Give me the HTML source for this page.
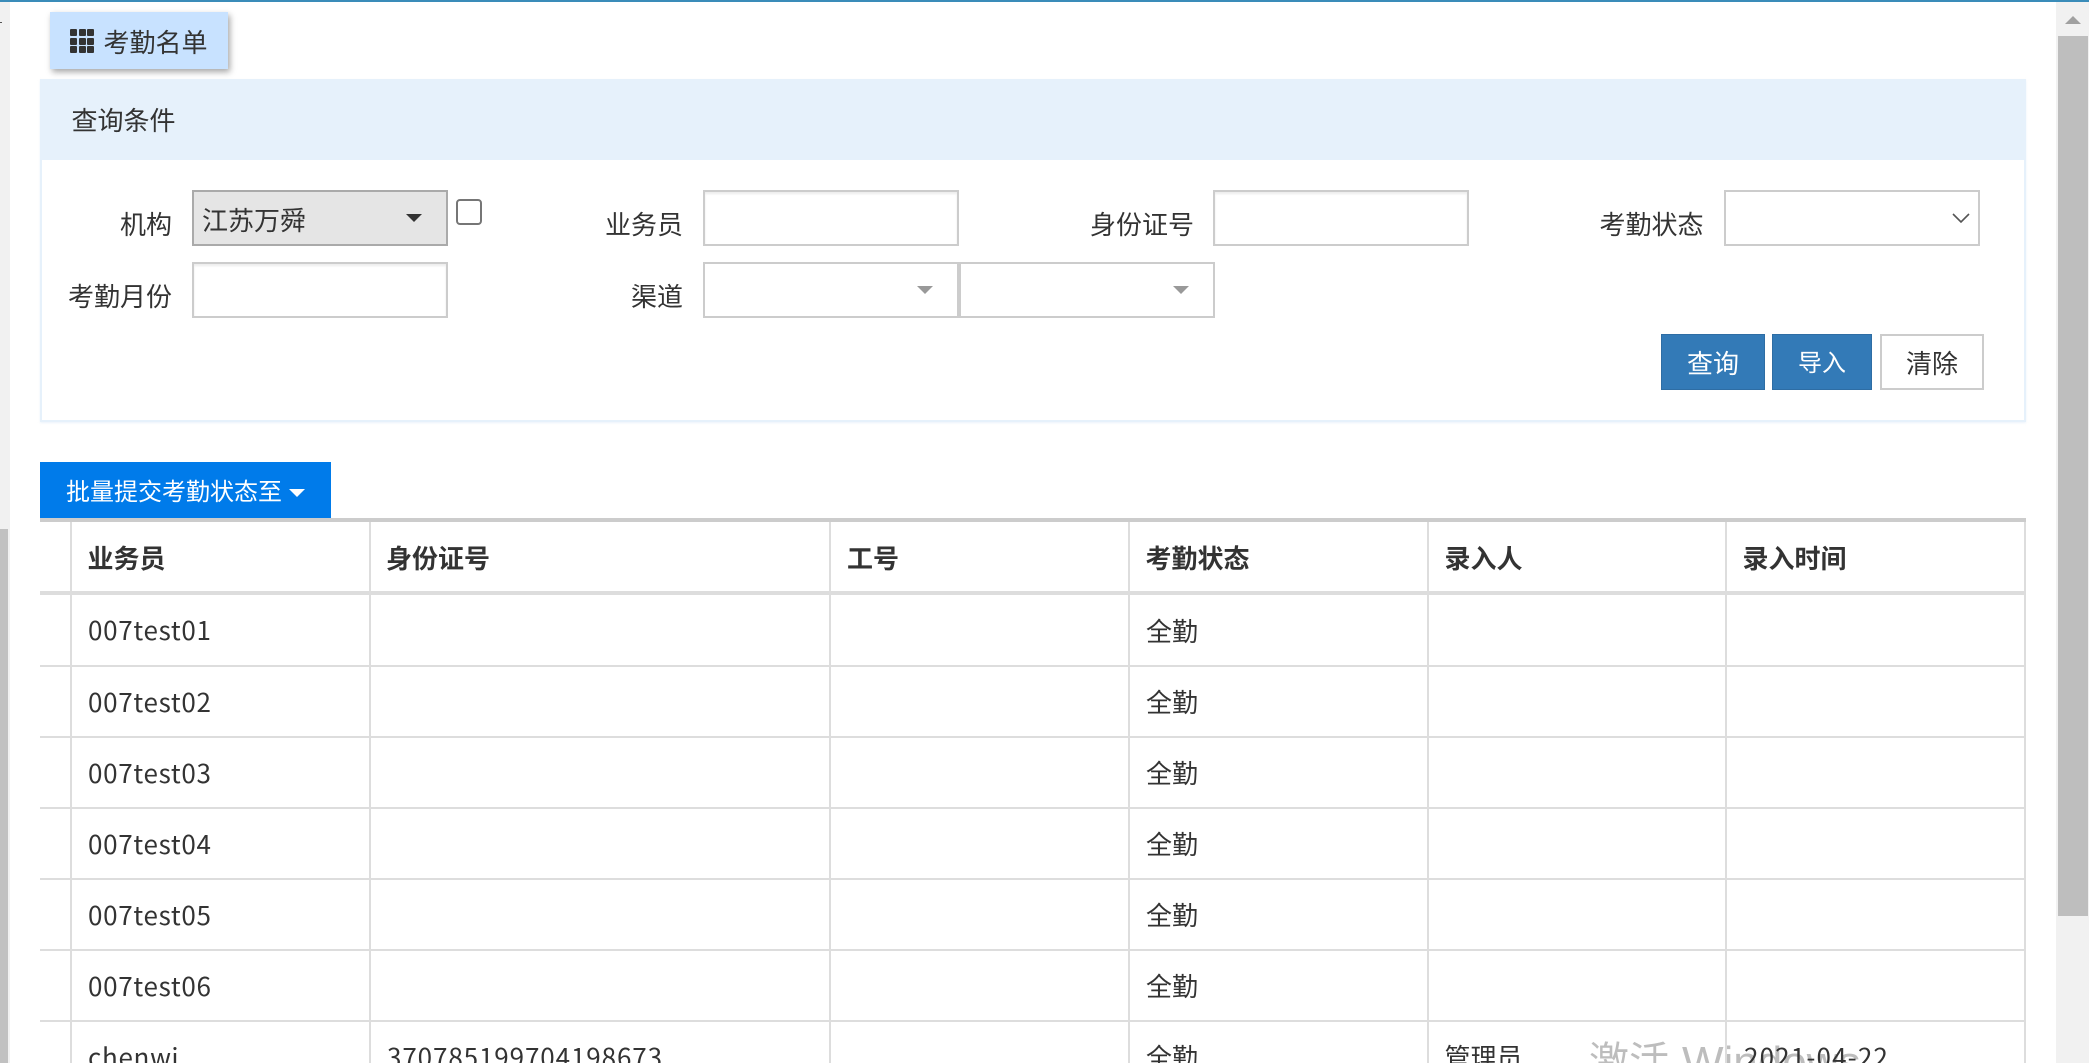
<!DOCTYPE html>
<html lang="zh-CN">
<head>
<meta charset="utf-8">
<title>考勤名单</title>
<style>
html,body{margin:0;padding:0;width:2089px;height:1063px;overflow:hidden;background:#fff}
body{position:relative;font-family:"Liberation Sans","Noto Sans CJK SC",sans-serif;color:#333;font-size:26px}
div,span{position:absolute;box-sizing:border-box}
.t{white-space:nowrap;line-height:40px;height:40px;font-family:"Noto Sans CJK SC","Liberation Sans",sans-serif;font-weight:400;font-size:26px;color:#333}
.r{text-align:right}
.b{font-weight:700;color:#333}
.n{letter-spacing:.7px}
.d{letter-spacing:.9px}
.inp{background:#fff;border:2px solid #ccc;box-shadow:inset 0 2px 2px rgba(0,0,0,.08)}
.sel{background:#fff;border:2px solid #ccc}
.v{background:#ddd;width:2px;top:522px;height:541px}
.h{background:#ddd;height:2px;left:40px;width:1986px}
.btn{height:56px;top:334px;text-align:center;line-height:52px;font-family:"Noto Sans CJK SC","Liberation Sans",sans-serif;font-weight:400}
.tri{width:0;height:0;border-style:solid;border-color:transparent}
.g{background:#333;width:7px;height:7px;border-radius:1px}
</style>
</head>
<body>
<!-- top bar -->
<div style="left:0;top:0;width:2089px;height:2px;background:#3a8cb9"></div>
<!-- left scrollbar -->
<div style="left:0;top:2px;width:10px;height:1061px;background:#f1f1f1"></div>
<div style="left:0;top:529px;width:8px;height:534px;background:#c1c1c1"></div>
<div style="left:0;top:22px;width:2px;height:1px;background:#555"></div>
<!-- right scrollbar -->
<div style="left:2056px;top:2px;width:33px;height:1061px;background:#f1f1f1"></div>
<div style="left:2058px;top:36px;width:30px;height:880px;background:#bebebe"></div>
<div class="tri" style="left:2065px;top:16px;border-width:0 8px 8px 8px;border-bottom-color:#a0a0a0"></div>

<!-- tab -->
<div style="left:50px;top:12px;width:178px;height:57px;background:#c8e2ff;box-shadow:2px 3px 6px rgba(0,0,0,.35)"></div>
<div class="g" style="left:70px;top:29px"></div><div class="g" style="left:78.5px;top:29px"></div><div class="g" style="left:87px;top:29px"></div>
<div class="g" style="left:70px;top:37.5px"></div><div class="g" style="left:78.5px;top:37.5px"></div><div class="g" style="left:87px;top:37.5px"></div>
<div class="g" style="left:70px;top:46px"></div><div class="g" style="left:78.5px;top:46px"></div><div class="g" style="left:87px;top:46px"></div>
<div class="t" style="left:103.5px;top:22px">考勤名单</div>

<!-- panel -->
<div style="left:40px;top:79px;width:1986px;height:343px;border:2px solid #e6f1fb;box-shadow:0 1px 2px rgba(200,220,240,.35)"></div>
<div style="left:40px;top:79px;width:1986px;height:81px;background:#e6f1fb"></div>
<div class="t" style="left:71.5px;top:100px">查询条件</div>

<!-- row 1 -->
<div class="t r" style="left:72px;width:100px;top:204px">机构</div>
<div style="left:192px;top:190px;width:256px;height:56px;background:#e5e5e5;border:2px solid #aaa"></div>
<div class="t" style="left:202px;top:200px">江苏万舜</div>
<div class="tri" style="left:406px;top:214px;border-width:8px 8px 0 8px;border-top-color:#333"></div>
<div style="left:456px;top:199px;width:26px;height:26px;border:2px solid #767676;border-radius:4px;background:#fff"></div>

<div class="t r" style="left:563px;width:120px;top:204px">业务员</div>
<div class="inp" style="left:703px;top:190px;width:256px;height:56px"></div>

<div class="t r" style="left:1074px;width:120px;top:204px">身份证号</div>
<div class="inp" style="left:1213px;top:190px;width:256px;height:56px"></div>

<div class="t r" style="left:1583.5px;width:120px;top:204px">考勤状态</div>
<div class="sel" style="left:1724px;top:190px;width:256px;height:56px"></div>
<svg style="position:absolute;left:1951px;top:212px" width="20" height="12" viewBox="0 0 20 12"><path d="M2 2 L10 10 L18 2" fill="none" stroke="#555" stroke-width="1.6"/></svg>

<!-- row 2 -->
<div class="t r" style="left:52px;width:120px;top:276px">考勤月份</div>
<div class="inp" style="left:192px;top:262px;width:256px;height:56px"></div>

<div class="t r" style="left:563px;width:120px;top:276px">渠道</div>
<div class="sel" style="left:703px;top:262px;width:256px;height:56px"></div>
<div class="tri" style="left:917px;top:286px;border-width:8px 8px 0 8px;border-top-color:#999"></div>
<div class="sel" style="left:959px;top:262px;width:256px;height:56px"></div>
<div class="tri" style="left:1173px;top:286px;border-width:8px 8px 0 8px;border-top-color:#999"></div>

<!-- buttons -->
<div class="btn" style="left:1661px;width:104px;background:#337ab7;border:1px solid #2e6da4;color:#fff;font-size:26px;line-height:56px">查询</div>
<div class="btn" style="left:1772px;width:100px;background:#337ab7;border:1px solid #2e6da4;color:#fff;font-size:24px;line-height:52px">导入</div>
<div class="btn" style="left:1880px;width:104px;background:#fff;border:2px solid #ccc;color:#333;font-size:26px;line-height:54px">清除</div>

<!-- batch button -->
<div style="left:40px;top:462px;width:291px;height:56px;background:#007bea"></div>
<div class="t" style="left:66px;top:470px;color:#fff;font-size:24px">批量提交考勤状态至</div>
<div class="tri" style="left:289px;top:489px;border-width:8px 8px 0 8px;border-top-color:#fff"></div>

<!-- watermark -->
<div class="t" style="left:1589px;top:1032px;font-size:40px;line-height:60px;height:60px;color:#bdbdbd;font-family:'Liberation Sans','Noto Sans CJK SC',sans-serif">激活</div>
<div class="t" style="left:1682px;top:1033px;font-size:44px;line-height:60px;height:60px;color:#bdbdbd;font-family:'Liberation Sans',sans-serif">Windows</div>

<!-- table lines -->
<div style="left:40px;top:518px;width:1986px;height:4px;background:#ccc"></div>
<div style="left:40px;top:591px;width:1986px;height:4px;background:#ddd"></div>
<div class="h" style="top:665px"></div>
<div class="h" style="top:736px"></div>
<div class="h" style="top:807px"></div>
<div class="h" style="top:878px"></div>
<div class="h" style="top:949px"></div>
<div class="h" style="top:1020px"></div>
<div class="v" style="left:70px"></div>
<div class="v" style="left:369px"></div>
<div class="v" style="left:829px"></div>
<div class="v" style="left:1128px"></div>
<div class="v" style="left:1427px"></div>
<div class="v" style="left:1725px"></div>
<div class="v" style="left:2024px"></div>

<!-- header -->
<div class="t b" style="left:87.5px;top:538px">业务员</div>
<div class="t b" style="left:386px;top:538px">身份证号</div>
<div class="t b" style="left:847px;top:538px">工号</div>
<div class="t b" style="left:1145.5px;top:538px">考勤状态</div>
<div class="t b" style="left:1444.5px;top:538px">录入人</div>
<div class="t b" style="left:1742.5px;top:538px">录入时间</div>

<!-- rows -->
<div class="t n" style="left:88px;top:610px">007test01</div><div class="t" style="left:1146px;top:611px">全勤</div>
<div class="t n" style="left:88px;top:682px">007test02</div><div class="t" style="left:1146px;top:682px">全勤</div>
<div class="t n" style="left:88px;top:753px">007test03</div><div class="t" style="left:1146px;top:753px">全勤</div>
<div class="t n" style="left:88px;top:824px">007test04</div><div class="t" style="left:1146px;top:824px">全勤</div>
<div class="t n" style="left:88px;top:895px">007test05</div><div class="t" style="left:1146px;top:895px">全勤</div>
<div class="t n" style="left:88px;top:966px">007test06</div><div class="t" style="left:1146px;top:966px">全勤</div>
<div class="t n" style="left:88px;top:1037px">chenwj</div>
<div class="t d" style="left:387px;top:1037px">370785199704198673</div>
<div class="t" style="left:1146px;top:1037px">全勤</div>
<div class="t" style="left:1444.5px;top:1037px">管理员</div>
<div class="t d" style="left:1744px;top:1037px;letter-spacing:1.15px">2021-04-22</div>
</body>
</html>
